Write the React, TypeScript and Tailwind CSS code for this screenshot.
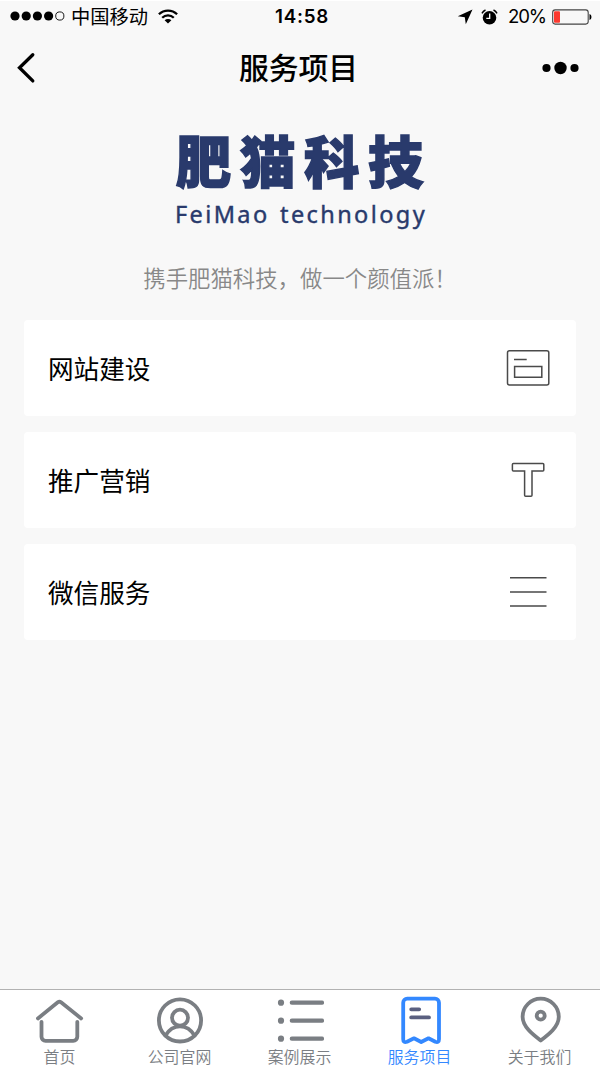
import type { ReactNode } from "react";
import clsx from "clsx";

const services: { title: string; icon: ReactNode }[] = [
  {
    title: "网站建设",
    icon: (
      <>
        <rect x="3.5" y="6.8" width="41.3" height="34.2" rx="2" />
        <path d="M10 15.5h12.7M10.6 22.6h27.2v10.6H10.6z" />
      </>
    ),
  },
  {
    title: "推广营销",
    icon: (
      <path d="M9.4 7.6h29.4a1 1 0 0 1 1 1v5.400a1 1 0 0 1-1 1H28v24.300a1 1 0 0 1-1 1h-5.400a1 1 0 0 1-1-1V15H9.400a1 1 0 0 1-1-1V8.600a1 1 0 0 1 1-1z" />
    ),
  },
  {
    title: "微信服务",
    icon: <path d="M6 9.7h36.5M6 24h36.5M6 38.1h36.5" />,
  },
];

const tabs: { label: string; active?: boolean; icon: ReactNode }[] = [
  {
    label: "首页",
    icon: (
      <>
        <path d="M1.9 23.4 21.8 7.3q1.6-1.2 3.2 0L45.2 23.4" />
        <path d="M5.5 26.8v15a4 4 0 0 0 4 4h27.8a4 4 0 0 0 4-4v-15" />
      </>
    ),
  },
  {
    label: "公司官网",
    icon: (
      <>
        <circle cx="24" cy="25.4" r="21.1" />
        <circle cx="24" cy="22.7" r="8" />
        <path d="M9.500 40.500c3.500-6 8.500-9.200 14.500-9.200s11 3.200 14.500 9.200" />
      </>
    ),
  },
  {
    label: "案例展示",
    icon: (
      <>
        <path d="M15.8 7.7H46M15.8 25.7H46M15.8 43.7H46" strokeWidth="4.2" />
        <g fill="currentColor" stroke="none">
          <circle cx="5" cy="7.7" r="3.1" />
          <circle cx="5" cy="25.7" r="3.1" />
          <circle cx="5" cy="43.7" r="3.1" />
        </g>
      </>
    ),
  },
  {
    label: "服务项目",
    active: true,
    icon: (
      <>
        <path d="M11.200 3.700H39a4 4 0 0 1 4 4v36.500q0 3.800-3.700 2.500L32.500 43.300 25.200 47 18 43.300 11 46.700q-3.800 1.300-3.800-2.500V7.700a4 4 0 0 1 4-4z" />
        <path className="stroke-[#5a6080]" d="M15.200 14.300h8M15.200 22.400h17.800" />
      </>
    ),
  },
  {
    label: "关于我们",
    icon: (
      <>
        <path d="M24.700 45.500C17.500 40 6.600 32 6.600 21.800a18.100 18.100 0 0 1 36.200 0C42.800 32 32 40 24.700 45.500z" />
        <circle cx="24.700" cy="20.700" r="4" />
      </>
    ),
  },
];

function StatusBar() {
  return (
    <div className="grid h-8 grid-cols-[1fr_auto_1fr] items-center border-t border-white text-black">
      <div className="flex items-center pl-[10px]">
        <svg className="mr-[6px] h-[10px] w-[55px]" viewBox="0 0 55 10">
          <circle cx="5" cy="5" r="4.6" />
          <circle cx="16.2" cy="5" r="4.6" />
          <circle cx="27.4" cy="5" r="4.6" />
          <circle cx="38.6" cy="5" r="4.6" />
          <circle cx="49.8" cy="5" r="4.1" fill="none" stroke="currentColor" strokeWidth="0.9" />
        </svg>
        <span className="text-[19.3px] leading-none">中国移动</span>
        <svg className="ml-[10px] h-[15px] w-5" viewBox="0 0 20 15" fill="none" stroke="currentColor" strokeWidth="2.3">
          <path d="M.9 5.3a13 13 0 0 1 18.2 0" />
          <path d="M4.2 8.7a8.3 8.3 0 0 1 11.6 0" />
          <path d="M10 14.6 6.6 11.3a4.9 4.9 0 0 1 6.8 0z" fill="currentColor" stroke="none" />
        </svg>
      </div>
      <span className="pt-0.5 pl-1 font-[Inter] text-[18.8px] leading-none font-semibold tracking-[0.7px]">14:58</span>
      <div className="flex items-center justify-end pr-2">
        <svg className="mr-2 h-4 w-4" viewBox="0 0 16 16">
          <path d="M15.5.5 8.8 15.2 7.8 8.2.8 7.2z" />
        </svg>
        <svg className="mr-[10px] h-4 w-[17px]" viewBox="0 0 17 16">
          <circle cx="8.5" cy="8.7" r="6.8" />
          <path d="M1 4.3A7 7 0 0 1 4.5 1M16 4.3A7 7 0 0 0 12.5 1" fill="none" stroke="black" strokeWidth="1.5" />
          <path d="M8.7 4.5v4.8H5.3" fill="none" stroke="white" strokeWidth="1.3" />
        </svg>
        <span className="font-[Inter] text-[18.6px] leading-none tracking-[-1.1px]">20%</span>
        <svg className="ml-[6px] h-4 w-10" viewBox="0 0 40 16">
          <rect x=".7" y=".9" width="35.5" height="14.2" rx="2.5" fill="none" stroke="#444" strokeWidth="1.1" />
          <rect x="2" y="2.3" width="6" height="11.5" rx="1" fill="#fc3a30" />
          <path d="M37.5 5q2 .5 2 3t-2 3z" />
        </svg>
      </div>
    </div>
  );
}

function NavBar() {
  return (
    <header className="grid h-[72px] grid-cols-[1fr_auto_1fr] items-center text-black">
      <svg className="ml-4 h-8 w-5" viewBox="0 0 20 32" fill="none" stroke="currentColor" strokeWidth="3.3" strokeLinecap="round">
        <path d="M16.8 2.7 3.5 15.8l13.3 13.1" />
      </svg>
      <h1 className="pr-[3px] pb-0.5 text-[29.8px] leading-none font-medium">服务项目</h1>
      <svg className="mr-5 h-4 w-10 justify-self-end" viewBox="0 0 40 16">
        <circle cx="6.5" cy="8" r="4.1" />
        <circle cx="20.5" cy="8" r="6.2" />
        <circle cx="34.5" cy="8" r="4.1" />
      </svg>
    </header>
  );
}

function Logo() {
  return (
    <div className="flex flex-col items-center text-[#293a6c]">
      <div className="mt-[21px] -mr-2 h-[73px] text-[55.5px] leading-[68px] font-black tracking-[8.6px] whitespace-nowrap [-webkit-text-stroke:1.4px_#293a6c]">
        肥猫科技
      </div>
      <div className="-mr-[2px] font-['Noto_Sans'] text-[23.5px] leading-8 font-normal tracking-[2.4px] whitespace-nowrap [word-spacing:2px] [-webkit-text-stroke:0.4px_#293a6c]">
        FeiMao technology
      </div>
    </div>
  );
}

export default function App() {
  return (
    <div className="flex h-[1067px] w-[600px] flex-col overflow-hidden bg-[#f8f8f8] font-['Noto_Sans_CJK_SC',sans-serif]">
      <StatusBar />
      <NavBar />
      <main className="flex-1">
        <Logo />
        <p className="mt-[31px] text-center text-[22.4px] leading-8 font-[350] text-[#888]">
          携手肥猫科技，做一个颜值派！
        </p>
        <div className="mx-6 mt-[27px] flex flex-col gap-4">
          {services.map((item) => (
            <div key={item.title} className="flex h-24 items-center justify-between rounded bg-white px-6">
              <span className="text-[25.6px] leading-none text-black">{item.title}</span>
              <svg
                className="h-12 w-12 text-[#4a4a4a]"
                viewBox="0 0 48 48"
                fill="none"
                stroke="currentColor"
                strokeWidth="1.5"
              >
                {item.icon}
              </svg>
            </div>
          ))}
        </div>
      </main>
      <nav className="grid h-[78px] grid-cols-5 border-t border-[#b2b2b2] bg-white">
        {tabs.map((tab) => (
          <div
            key={tab.label}
            className={clsx("flex flex-col items-center pt-[5px]", tab.active ? "text-[#3388ff]" : "text-[#7a7e83]")}
          >
            <svg
              className="h-[51px] w-12"
              viewBox="0 0 48 51"
              fill="none"
              stroke="currentColor"
              strokeWidth="3.8"
              strokeLinecap="round"
              strokeLinejoin="round"
            >
              {tab.icon}
            </svg>
            <span className="pr-px text-[15.9px] leading-[22px] font-[350]">{tab.label}</span>
          </div>
        ))}
      </nav>
    </div>
  );
}
